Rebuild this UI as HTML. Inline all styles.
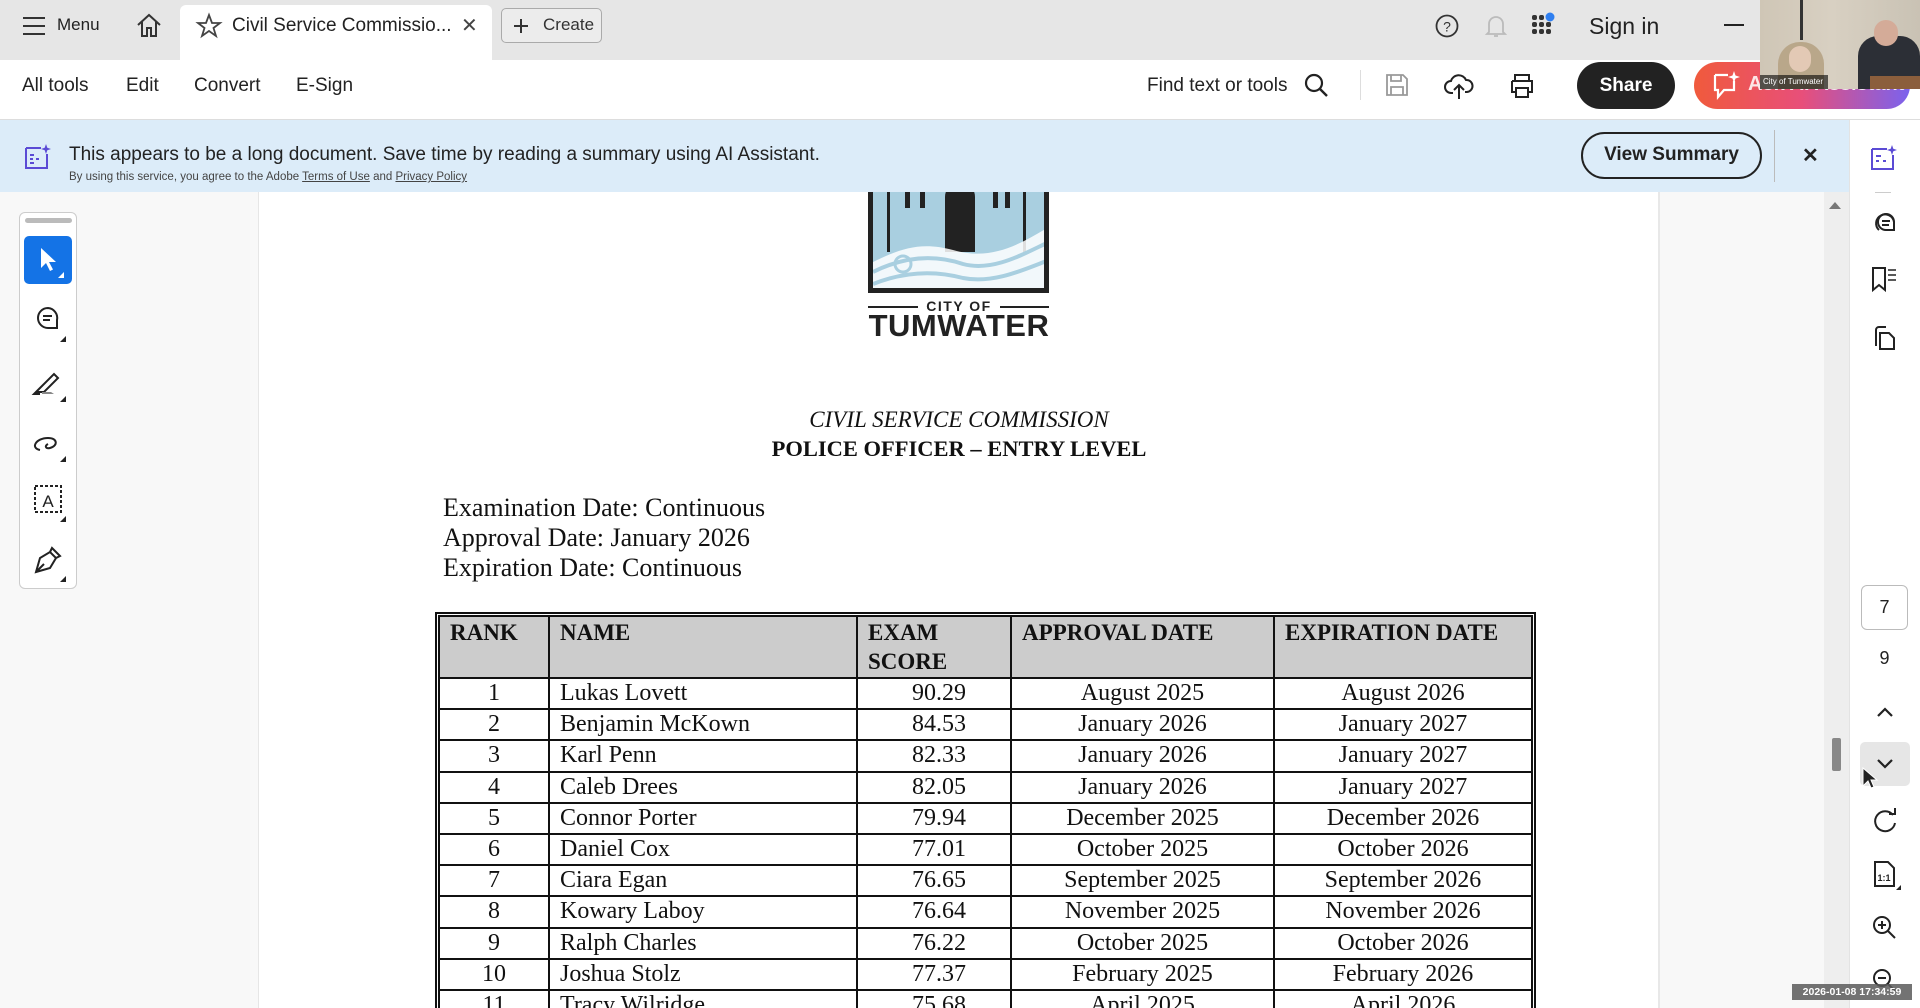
<!DOCTYPE html>
<html style="overflow:hidden;height:1008px"><head><meta charset="utf-8"><style>
*{margin:0;padding:0;box-sizing:border-box}
body{width:1920px;height:1008px;overflow:hidden;position:relative;background:#f8f8f8;font-family:"Liberation Sans",sans-serif;color:#222}
.a{position:absolute}
svg{position:absolute;overflow:visible}
.top{left:0;top:0;width:1920px;height:60px;background:#e6e6e6}
.tb{left:0;top:60px;width:1920px;height:60px;background:#fff;border-bottom:1px solid #ddd}
.ban{left:0;top:120px;width:1849px;height:72px;background:#dcecf9}
.t{font-size:19px;color:#222;white-space:nowrap}
.serif{font-family:"Liberation Serif",serif;color:#111}
table{border-collapse:collapse;font-family:"Liberation Serif",serif;font-size:24px;color:#111}
td{border:2px solid #111;height:31.2px;line-height:27px;padding:0 10px;white-space:nowrap}
th{border:2px solid #111;background:#ccc;text-align:left;vertical-align:top;font-weight:bold;padding:1px 10px;line-height:29px;height:61px;font-size:23px}
.c{text-align:center}.r{text-align:right;padding-right:44px}
</style></head><body>
<div class="a top"></div>
<svg style="left:23px;top:17px" width="22" height="18"><path d="M0 1H22M0 9H22M0 17H22" stroke="#333" stroke-width="2"/></svg>
<div class="a t" style="left:57px;top:15px;font-size:17px">Menu</div>
<svg style="left:135px;top:12px" width="28" height="26"><path d="M3 13L14 3L25 13M7 10V24H12V16H16V24H21V10" fill="none" stroke="#333" stroke-width="2"/></svg>
<div class="a" style="left:180px;top:5px;width:312px;height:55px;background:#fff;border-radius:6px 6px 0 0"></div>
<svg style="left:196px;top:13px" width="26" height="26"><path d="M13 2L16 10H24L17.5 15L20 23L13 18L6 23L8.5 15L2 10H10Z" fill="none" stroke="#444" stroke-width="1.8"/></svg>
<div class="a t" style="left:232px;top:15px">Civil Service Commissio...</div>
<div class="a t" style="left:461px;top:13px;font-size:20px;color:#444">✕</div>
<div class="a" style="left:501px;top:8px;width:101px;height:35px;border:1.5px solid #aaa;border-radius:5px;background:#ececec"></div>
<svg style="left:513px;top:18px" width="16" height="16"><path d="M8 1V15M1 8H15" stroke="#333" stroke-width="2"/></svg>
<div class="a t" style="left:543px;top:15px;font-size:17px;color:#333">Create</div>
<svg style="left:1435px;top:14px" width="24" height="24"><circle cx="12" cy="12" r="10.5" fill="none" stroke="#333" stroke-width="1.8"/><text x="12" y="17.5" font-size="14" text-anchor="middle" font-family="Liberation Sans" fill="#333">?</text></svg>
<svg style="left:1484px;top:13px" width="24" height="26"><path d="M5 19V11A7 7 0 0 1 19 11V19L21 21H3ZM10 23H14" fill="none" stroke="#bbb" stroke-width="1.8"/></svg>
<svg style="left:1532px;top:13px" width="26" height="24"><g fill="#333"><rect x="0" y="2" width="5" height="5" rx="2"/><rect x="7" y="2" width="5" height="5" rx="2"/><rect x="0" y="9" width="5" height="5" rx="2"/><rect x="7" y="9" width="5" height="5" rx="2"/><rect x="14" y="9" width="5" height="5" rx="2"/><rect x="0" y="16" width="5" height="5" rx="2"/><rect x="7" y="16" width="5" height="5" rx="2"/><rect x="14" y="16" width="5" height="5" rx="2"/></g><circle cx="18" cy="4" r="4.5" fill="#2f7ff0"/></svg>
<div class="a t" style="left:1589px;top:13px;font-size:23px;color:#222">Sign in</div>
<div class="a" style="left:1724px;top:24px;width:20px;height:2px;background:#222"></div>
<div class="a tb"></div>
<div class="a t" style="left:22px;top:75px">All tools</div>
<div class="a t" style="left:126px;top:75px">Edit</div>
<div class="a t" style="left:194px;top:75px">Convert</div>
<div class="a t" style="left:296px;top:75px">E-Sign</div>
<div class="a t" style="left:1147px;top:75px">Find text or tools</div>
<svg style="left:1304px;top:73px" width="26" height="26"><circle cx="10" cy="10" r="8" fill="none" stroke="#222" stroke-width="2.2"/><path d="M16 16L23 23" stroke="#222" stroke-width="2.4"/></svg>
<div class="a" style="left:1360px;top:70px;width:1px;height:30px;background:#ddd"></div>
<svg style="left:1385px;top:73px" width="24" height="24"><path d="M2 2H18L22 6V22H2Z M6 2V8H16V2 M6 22V14H18V22" fill="none" stroke="#999" stroke-width="1.8"/></svg>
<svg style="left:1444px;top:71px" width="30" height="30"><path d="M9 22H7A6 6 0 0 1 7 10A8 8 0 0 1 22 9A6 6 0 0 1 23 21H21M15 28V14M10 19L15 14L20 19" fill="none" stroke="#222" stroke-width="2"/></svg>
<svg style="left:1508px;top:73px" width="28" height="26"><path d="M7 8V2H21V8M4 8H24V19H20M8 19H4V8M8 15H20V24H8Z" fill="none" stroke="#222" stroke-width="2"/></svg>
<div class="a" style="left:1577px;top:62px;width:98px;height:47px;border-radius:24px;background:#222;color:#fff;font-size:19px;font-weight:bold;text-align:center;line-height:47px">Share</div>
<div class="a" style="left:1694px;top:62px;width:216px;height:47px;border-radius:24px;background:linear-gradient(90deg,#f05a3c,#e84f7a 50%,#7a62ee);"></div>
<svg style="left:1712px;top:70px" width="30" height="32"><path d="M3 5H16M22 11V20H12L6 27V20H3V5" fill="none" stroke="#fff" stroke-width="2.2"/><path d="M22 1L23.5 5.5L28 7L23.5 8.5L22 13L20.5 8.5L16 7L20.5 5.5Z" fill="#fff"/></svg>
<div class="a" style="left:1748px;top:73px;color:#fff;font-size:20px;font-weight:bold;opacity:.85">Ask AI Assistant</div>
<div class="a" style="left:1760px;top:0;width:160px;height:89px;background:linear-gradient(90deg,#cfc6b6,#d8d0c2 45%,#c9c2b4);overflow:hidden">
<div class="a" style="left:40px;top:0;width:3px;height:40px;background:#333"></div>
<div class="a" style="left:18px;top:42px;width:46px;height:50px;border-radius:22px 22px 0 0;background:#b9a78a"></div>
<div class="a" style="left:29px;top:46px;width:22px;height:26px;border-radius:11px;background:#e3c9b5"></div>
<div class="a" style="left:98px;top:36px;width:62px;height:55px;border-radius:20px 20px 0 0;background:#2c2f36"></div>
<div class="a" style="left:114px;top:20px;width:24px;height:26px;border-radius:12px;background:#d4ab98"></div>
<div class="a" style="left:110px;top:76px;width:50px;height:14px;background:#8b5e3c"></div>
<div class="a" style="left:0;top:75px;width:68px;height:14px;background:rgba(0,0,0,.6);color:#fff;font-size:8px;line-height:14px;padding-left:3px;white-space:nowrap">City of Tumwater</div>
</div>
<div class="a ban"></div>
<svg style="left:24px;top:143px" width="28" height="28"><path d="M2 5H17M23 11V25H2V5" fill="none" stroke="#5b4bd5" stroke-width="2"/><path d="M6 12H10M6 16H9M6 20H10M12 16H15" stroke="#5b4bd5" stroke-width="2"/><path d="M22 1L23.3 4.7L27 6L23.3 7.3L22 11L20.7 7.3L17 6L20.7 4.7Z" fill="#5b4bd5"/></svg>
<div class="a t" style="left:69px;top:144px;font-size:19px">This appears to be a long document. Save time by reading a summary using AI Assistant.</div>
<div class="a t" style="left:69px;top:171px;font-size:11.5px;color:#444">By using this service, you agree to the Adobe <u>Terms of Use</u> and <u>Privacy Policy</u></div>
<div class="a" style="left:1581px;top:132px;width:181px;height:47px;border:2.5px solid #222;border-radius:24px;font-size:19px;font-weight:bold;text-align:center;line-height:42px">View Summary</div>
<div class="a" style="left:1774px;top:130px;width:1px;height:52px;background:#bbb"></div>
<div class="a t" style="left:1802px;top:143px;font-size:20px;font-weight:bold">✕</div>
<div class="a" style="left:258px;top:192px;width:1402px;height:816px;background:#fff;border-left:1px solid #e6e6e6;border-right:2px solid #e8e8e8"></div>
<div class="a" style="left:1824px;top:192px;width:25px;height:816px;background:#eee"></div>
<svg style="left:1828px;top:200px" width="14" height="10"><path d="M1 9L7 2L13 9Z" fill="#777"/></svg>
<div class="a" style="left:1832px;top:738px;width:9px;height:33px;background:#888;border-radius:2px"></div>
<div class="a" style="left:19px;top:212px;width:58px;height:377px;background:#fff;border:1.5px solid #ccc;border-radius:6px"></div>
<div class="a" style="left:25px;top:218px;width:47px;height:5px;background:#bbb;border-radius:3px"></div>
<div class="a" style="left:24px;top:236px;width:48px;height:48px;background:#1473e6;border-radius:5px"></div>
<svg style="left:24px;top:236px" width="48" height="48"><path d="M17 12V32L22 27L26 35L29 33.5L25 26H32Z" fill="#fff"/><path d="M40 36V42H34Z" fill="#fff"/></svg>
<svg style="left:24px;top:300px" width="48" height="48"><path d="M24 8A10 10 0 1 0 24 28H33V20A10 10 0 0 0 24 8ZM19 16H28M19 20H26" fill="none" stroke="#222" stroke-width="2"/><path d="M42 36V42H36Z" fill="#222"/></svg>
<svg style="left:24px;top:360px" width="48" height="48"><path d="M12 32L16 28L30 14L34 18L20 32ZM12 32L10 34H16" fill="none" stroke="#222" stroke-width="2"/><path d="M18 34H30L27 32H18Z" fill="#888"/><path d="M42 36V42H36Z" fill="#222"/></svg>
<svg style="left:24px;top:420px" width="48" height="48"><path d="M16 30C6 28 12 18 24 18C34 18 34 26 26 28C22 29 20 26 24 24" fill="none" stroke="#222" stroke-width="2"/><path d="M42 36V42H36Z" fill="#222"/></svg>
<svg style="left:24px;top:480px" width="48" height="48"><rect x="11" y="6" width="26" height="26" fill="none" stroke="#222" stroke-width="2" stroke-dasharray="3 2"/><text x="24" y="27" font-size="17" text-anchor="middle" font-family="Liberation Sans" fill="#222">A</text><path d="M42 36V42H36Z" fill="#222"/></svg>
<svg style="left:24px;top:540px" width="48" height="48"><path d="M12 32L16 18L26 12L32 18L26 28ZM12 32L20 24M26 12L28 8L36 16L32 18" fill="none" stroke="#222" stroke-width="2"/><path d="M42 36V42H36Z" fill="#222"/></svg>
<div class="a" style="left:1849px;top:120px;width:71px;height:888px;background:#fff;border-left:1px solid #e3e3e3"></div>
<svg style="left:1870px;top:144px" width="28" height="28"><path d="M2 5H17M23 11V25H2V5" fill="none" stroke="#5b4bd5" stroke-width="2"/><path d="M6 12H11M6 17H9M13 17H16" stroke="#5b4bd5" stroke-width="2"/><path d="M22 1L23.3 4.7L27 6L23.3 7.3L22 11L20.7 7.3L17 6L20.7 4.7Z" fill="#5b4bd5"/></svg>
<div class="a" style="left:1875px;top:192px;width:16px;height:1px;background:#ccc"></div>
<svg style="left:1870px;top:208px" width="28" height="28"><path d="M9 22A9 9 0 1 1 24 14" fill="none" stroke="#222" stroke-width="2"/><path d="M16 6A8 8 0 1 0 16 22H24V14A8 8 0 0 0 16 6ZM12 13H20M12 17H19" fill="none" stroke="#222" stroke-width="2"/></svg>
<svg style="left:1870px;top:265px" width="28" height="28"><path d="M3 3H15V25L9 20L3 25Z" fill="none" stroke="#222" stroke-width="2"/><path d="M18 5H26M18 10H26M18 15H26" stroke="#222" stroke-width="1.6"/></svg>
<svg style="left:1870px;top:324px" width="28" height="28"><path d="M6 22V6A3 3 0 0 1 9 3H16" fill="none" stroke="#222" stroke-width="2"/><path d="M10 9H19L24 14V25H10Z" fill="none" stroke="#222" stroke-width="2"/></svg>
<div class="a" style="left:1861px;top:585px;width:47px;height:45px;border:1.5px solid #bbb;border-radius:6px;text-align:center;line-height:42px;font-size:18px">7</div>
<div class="a" style="left:1861px;top:648px;width:47px;text-align:center;font-size:18px">9</div>
<svg style="left:1876px;top:706px" width="18" height="12"><path d="M2 10L9 3L16 10" fill="none" stroke="#222" stroke-width="2.2"/></svg>
<div class="a" style="left:1860px;top:742px;width:50px;height:44px;background:#e6e6e6;border-radius:5px"></div>
<svg style="left:1876px;top:758px" width="18" height="12"><path d="M2 2L9 9L16 2" fill="none" stroke="#222" stroke-width="2.2"/></svg>
<svg style="left:1861px;top:766px" width="20" height="26"><path d="M2 2V20L7 15L10 22L13 21L10 14H16Z" fill="#222" stroke="#fff" stroke-width="1"/></svg>
<svg style="left:1872px;top:808px" width="26" height="26"><path d="M21 7A10 10 0 1 0 23 15" fill="none" stroke="#222" stroke-width="2"/><path d="M17 6H23V0" fill="none" stroke="#222" stroke-width="2"/></svg>
<svg style="left:1872px;top:860px" width="30" height="30"><path d="M3 2H16L22 8V26H3Z" fill="none" stroke="#222" stroke-width="2"/><text x="12" y="21" font-size="9" text-anchor="middle" font-family="Liberation Sans" font-weight="bold" fill="#222">1:1</text><path d="M29 25V30H24Z" fill="#222"/></svg>
<svg style="left:1872px;top:915px" width="26" height="26"><circle cx="10" cy="10" r="8" fill="none" stroke="#222" stroke-width="2"/><path d="M16 16L23 23M6 10H14M10 6V14" stroke="#222" stroke-width="2"/></svg>
<svg style="left:1872px;top:968px" width="26" height="26"><circle cx="10" cy="10" r="8" fill="none" stroke="#222" stroke-width="2"/><path d="M16 16L23 23M6 10H14" stroke="#222" stroke-width="2"/></svg>
<div class="a" style="left:1792px;top:984px;width:120px;height:16px;background:rgba(90,90,90,.85);color:#fff;font-size:10.5px;font-weight:bold;line-height:16px;text-align:center">2026-01-08 17:34:59</div>
<div class="a" style="left:868px;top:192px;width:181px;height:101px;background:#a9cfe0;border:5px solid #222;border-top:none;overflow:hidden">
<div class="a" style="left:14px;top:0;width:3px;height:60px;background:#222"></div>
<div class="a" style="left:150px;top:0;width:3px;height:60px;background:#222"></div>
<div class="a" style="left:32px;top:0;width:5px;height:16px;background:#222"></div>
<div class="a" style="left:47px;top:0;width:5px;height:16px;background:#222"></div>
<div class="a" style="left:120px;top:0;width:5px;height:16px;background:#222"></div>
<div class="a" style="left:132px;top:0;width:5px;height:16px;background:#222"></div>
<div class="a" style="left:72px;top:-10px;width:30px;height:70px;border:3px solid #222;border-radius:15px 15px 0 0;background:#222"></div>
<svg style="left:0;top:0" width="176" height="101"><path d="M0 70C30 55 50 50 80 58C120 70 150 50 176 35V101H0Z" fill="#fff" opacity=".85"/><path d="M0 80C30 65 60 62 90 72C120 80 150 62 176 50M0 92C30 80 60 78 90 86C120 92 150 78 176 68" fill="none" stroke="#a9cfe0" stroke-width="4"/><circle cx="30" cy="72" r="8" fill="none" stroke="#a9cfe0" stroke-width="3"/></svg>
</div>
<div class="a" style="left:868px;top:306px;width:50px;height:2px;background:#222"></div>
<div class="a" style="left:1000px;top:306px;width:49px;height:2px;background:#222"></div>
<div class="a" style="left:918px;top:298px;width:82px;text-align:center;font-weight:bold;font-size:14px;letter-spacing:1.5px;color:#222">CITY OF</div>
<div class="a" style="left:858px;top:308px;width:202px;text-align:center;font-weight:bold;font-size:31px;color:#222;letter-spacing:0.5px">TUMWATER</div>
<div class="a serif" style="left:0;width:1918px;text-align:center;top:407px;font-size:23px;font-style:italic">CIVIL SERVICE COMMISSION</div>
<div class="a serif" style="left:0;width:1918px;text-align:center;top:436px;font-size:22.5px;font-weight:bold">POLICE OFFICER – ENTRY LEVEL</div>
<div class="a serif" style="left:443px;top:493px;font-size:26px;line-height:30px">Examination Date: Continuous<br>Approval Date: January 2026<br>Expiration Date: Continuous</div>
<div class="a" style="left:420px;top:600px;width:1140px;height:408px;overflow:hidden">
<div class="a" style="left:15px;top:12px;border:2px solid #111;padding:1px">
<table style="width:1095px">
<colgroup><col style="width:110px"><col style="width:308px"><col style="width:154px"><col style="width:263px"><col></colgroup>
<tr><th>RANK</th><th>NAME</th><th>EXAM<br>SCORE</th><th>APPROVAL DATE</th><th>EXPIRATION DATE</th></tr>
<tr><td class="c">1</td><td>Lukas Lovett</td><td class="r">90.29</td><td class="c">August 2025</td><td class="c">August 2026</td></tr>
<tr><td class="c">2</td><td>Benjamin McKown</td><td class="r">84.53</td><td class="c">January 2026</td><td class="c">January 2027</td></tr>
<tr><td class="c">3</td><td>Karl Penn</td><td class="r">82.33</td><td class="c">January 2026</td><td class="c">January 2027</td></tr>
<tr><td class="c">4</td><td>Caleb Drees</td><td class="r">82.05</td><td class="c">January 2026</td><td class="c">January 2027</td></tr>
<tr><td class="c">5</td><td>Connor Porter</td><td class="r">79.94</td><td class="c">December 2025</td><td class="c">December 2026</td></tr>
<tr><td class="c">6</td><td>Daniel Cox</td><td class="r">77.01</td><td class="c">October 2025</td><td class="c">October 2026</td></tr>
<tr><td class="c">7</td><td>Ciara Egan</td><td class="r">76.65</td><td class="c">September 2025</td><td class="c">September 2026</td></tr>
<tr><td class="c">8</td><td>Kowary Laboy</td><td class="r">76.64</td><td class="c">November 2025</td><td class="c">November 2026</td></tr>
<tr><td class="c">9</td><td>Ralph Charles</td><td class="r">76.22</td><td class="c">October 2025</td><td class="c">October 2026</td></tr>
<tr><td class="c">10</td><td>Joshua Stolz</td><td class="r">77.37</td><td class="c">February 2025</td><td class="c">February 2026</td></tr>
<tr><td class="c">11</td><td>Tracy Wilridge</td><td class="r">75.68</td><td class="c">April 2025</td><td class="c">April 2026</td></tr>
</table></div></div>
</body></html>
